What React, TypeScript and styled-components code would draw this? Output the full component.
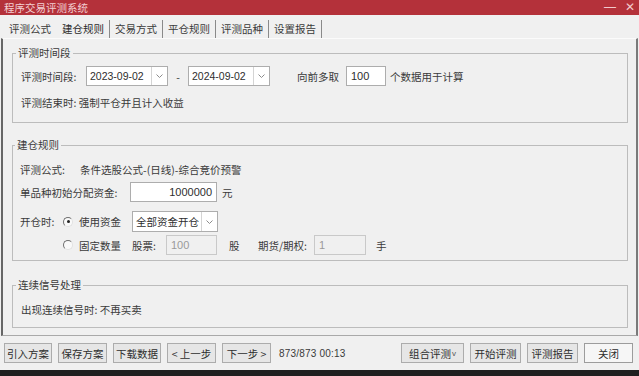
import styled, { createGlobalStyle } from 'styled-components'

const GlobalStyle = createGlobalStyle`
  body {
    margin: 0;
    background: #f0f0f0;
  }
`

const CJK = `"Noto Sans CJK SC", "Noto Sans", sans-serif`
const NUM = `"Liberation Sans", "Noto Sans CJK SC", sans-serif`

const Window = styled.div`
  width: 639px;
  height: 376px;
  overflow: hidden;
  display: flex;
  flex-direction: column;
  background: #f0f0f0;
  color: #3a3a3a;
  font-family: ${CJK};
  font-size: 10.5px;
`

const TitleBar = styled.div`
  height: 15px;
  flex-shrink: 0;
  display: flex;
  align-items: center;
  justify-content: space-between;
  padding: 0 4px;
  background: #b4313a;
  color: #f3d0d3;
  line-height: 15px;
`

const WinControls = styled.div`
  display: flex;
  gap: 9px;
  font-family: ${NUM};
  font-size: 12px;
  color: #f2c9cc;
`

const TabStrip = styled.div`
  height: 23px;
  flex-shrink: 0;
  display: flex;
  align-items: flex-end;
  padding-left: 4px;
`

const Tab = styled.div<{ $sep: boolean; $active?: boolean }>`
  height: 18px;
  line-height: 18px;
  padding: 0 5px;
  border-right: 1px solid ${(p) => (p.$sep ? '#8a8a8a' : 'transparent')};
  color: ${(p) => (p.$active ? '#2a2a2a' : '#3a3a3a')};
  white-space: nowrap;
`

const Panel = styled.div`
  height: 298px;
  flex-shrink: 0;
  box-sizing: border-box;
  margin: 0 1px;
  padding: 7px 8px 0 9px;
  border-top: 1px solid #fbfbfb;
  border-left: 2px solid #666;
  border-right: 2px solid #7a7a7a;
  border-bottom: 1px solid #a9a9a9;
  display: flex;
  flex-direction: column;
`

const Group = styled.fieldset<{ $mt: number; $pb: number; $pl: number }>`
  margin: ${(p) => p.$mt}px 0 0 0;
  padding: 0 8px ${(p) => p.$pb}px ${(p) => p.$pl}px;
  border: 1px solid #bcbcbc;
  min-width: 0;
`

const Legend = styled.legend`
  padding: 0 2px;
  margin-left: -5px;
  height: 14px;
  line-height: 14px;
`

const Row = styled.div<{ $mt: number; $h: number }>`
  margin-top: ${(p) => p.$mt}px;
  height: ${(p) => p.$h}px;
  display: flex;
  align-items: center;
  white-space: nowrap;
`

const Label = styled.span<{ $w?: number; $ml?: number }>`
  display: inline-block;
  width: ${(p) => (p.$w ? `${p.$w}px` : 'auto')};
  margin-left: ${(p) => p.$ml ?? 0}px;
  flex-shrink: 0;
`

const Combo = styled.div<{ $w: number }>`
  width: ${(p) => p.$w}px;
  height: 100%;
  box-sizing: border-box;
  display: flex;
  background: #fff;
  border: 1px solid #adadad;
`

const ComboText = styled.div<{ $num?: boolean }>`
  flex: 1;
  padding-left: 3px;
  display: flex;
  align-items: center;
  font-family: ${(p) => (p.$num ? NUM : CJK)};
  font-size: 10.5px;
  color: #2e2e2e;
  overflow: hidden;
`

const ComboArrow = styled.div`
  width: 15px;
  border-left: 1px solid #d4d4d4;
  display: flex;
  align-items: center;
  justify-content: center;
`

const Dash = styled.span`
  width: 20px;
  text-align: center;
  flex-shrink: 0;
`

const Input = styled.div<{ $w: number; $right?: boolean; $disabled?: boolean }>`
  width: ${(p) => p.$w}px;
  height: 100%;
  box-sizing: border-box;
  flex-shrink: 0;
  display: flex;
  align-items: center;
  justify-content: ${(p) => (p.$right ? 'flex-end' : 'flex-start')};
  padding: 0 4px;
  background: ${(p) => (p.$disabled ? '#f0f0f0' : '#fff')};
  border: 1px solid ${(p) => (p.$disabled ? '#c9c9c9' : '#adadad')};
  color: ${(p) => (p.$disabled ? '#9a9a9a' : '#2e2e2e')};
  font-family: ${NUM};
  font-size: 11px;
`

const Radio = styled.span<{ $checked?: boolean }>`
  width: 10px;
  height: 10px;
  box-sizing: border-box;
  flex-shrink: 0;
  border-radius: 50%;
  border: 1px solid;
  border-color: #6f6f6f #e2e2e2 #e2e2e2 #6f6f6f;
  background: #f9f9f9;
  display: flex;
  align-items: center;
  justify-content: center;
  margin-right: 6px;

  &::after {
    content: '';
    width: 3px;
    height: 3px;
    border-radius: 50%;
    background: ${(p) => (p.$checked ? '#222' : 'transparent')};
  }
`

const Footer = styled.div`
  height: 34px;
  flex-shrink: 0;
  display: flex;
  align-items: center;
  gap: 6px;
  padding: 0 6px 0 4px;
`

const Button = styled.div<{ $w: number; $primary?: boolean }>`
  width: ${(p) => p.$w}px;
  height: 20px;
  box-sizing: border-box;
  display: flex;
  align-items: center;
  justify-content: center;
  background: ${(p) => (p.$primary ? '#f6f6f6' : '#e6e6e6')};
  border: 1px solid ${(p) => (p.$primary ? '#9c9c9c' : '#acacac')};
  color: #2e2e2e;
  white-space: nowrap;
`

const Caret = styled.span`
  font-family: ${NUM};
  font-size: 8px;
  margin-left: 1px;
  color: #555;
`

const Status = styled.span`
  margin-left: 2px;
  font-family: ${NUM};
  font-size: 10px;
  color: #3a3a3a;
  letter-spacing: 0.2px;
`

const Spacer = styled.div`
  flex: 1;
`

const BottomBar = styled.div`
  height: 6px;
  flex-shrink: 0;
  background: #1f1f1f;
`

function Arrow() {
  return (
    <svg width="7" height="4" viewBox="0 0 7 4">
      <path d="M0.5 0.5 L3.5 3.5 L6.5 0.5" fill="none" stroke="#8c8c8c" strokeWidth="1" />
    </svg>
  )
}

function DateBox({ value }: { value: string }) {
  return (
    <Combo $w={82}>
      <ComboText $num>{value}</ComboText>
      <ComboArrow>
        <Arrow />
      </ComboArrow>
    </Combo>
  )
}

const tabs = ['评测公式', '建仓规则', '交易方式', '平仓规则', '评测品种', '设置报告']

export default function App() {
  return (
    <Window>
      <GlobalStyle />
      <TitleBar>
        <span>程序交易评测系统</span>
        <WinControls>
          <span>—</span>
          <span>✕</span>
        </WinControls>
      </TitleBar>

      <TabStrip>
        {tabs.map((t, i) => (
          <Tab key={t} $sep={i !== 0} $active={i === 1}>
            {t}
          </Tab>
        ))}
      </TabStrip>

      <Panel>
        <Group $mt={0} $pb={13} $pl={8}>
          <Legend>评测时间段</Legend>
          <Row $mt={6} $h={20}>
            <Label $w={65}>评测时间段:</Label>
            <DateBox value="2023-09-02" />
            <Dash>-</Dash>
            <DateBox value="2024-09-02" />
            <Label $w={49} $ml={27}>
              向前多取
            </Label>
            <Input $w={40}>100</Input>
            <Label $ml={4}>个数据用于计算</Label>
          </Row>
          <Row $mt={9} $h={14}>
            <Label>评测结束时: 强制平仓并且计入收益</Label>
          </Row>
        </Group>

        <Group $mt={15} $pb={5} $pl={7}>
          <Legend>建仓规则</Legend>
          <Row $mt={10} $h={14}>
            <Label $w={60}>评测公式:</Label>
            <Label>条件选股公式-(日线)-综合竞价预警</Label>
          </Row>
          <Row $mt={6} $h={20}>
            <Label $w={110}>单品种初始分配资金:</Label>
            <Input $w={87} $right>
              1000000
            </Input>
            <Label $ml={5}>元</Label>
          </Row>
          <Row $mt={9} $h={21}>
            <Label $w={43}>开仓时:</Label>
            <Radio $checked />
            <Label $w={53}>使用资金</Label>
            <Combo $w={86}>
              <ComboText>全部资金开仓</ComboText>
              <ComboArrow>
                <Arrow />
              </ComboArrow>
            </Combo>
          </Row>
          <Row $mt={3} $h={20}>
            <Label $w={43} />
            <Radio />
            <Label $w={53}>固定数量</Label>
            <Label $w={34}>股票:</Label>
            <Input $w={51} $disabled>
              100
            </Input>
            <Label $w={29} $ml={12}>
              股
            </Label>
            <Label $w={56}>期货/期权:</Label>
            <Input $w={52} $disabled>
              1
            </Input>
            <Label $ml={10}>手</Label>
          </Row>
        </Group>

        <Group $mt={17} $pb={11} $pl={8}>
          <Legend>连续信号处理</Legend>
          <Row $mt={10} $h={14}>
            <Label>出现连续信号时: 不再买卖</Label>
          </Row>
        </Group>
      </Panel>

      <Footer>
        <Button $w={48}>引入方案</Button>
        <Button $w={49}>保存方案</Button>
        <Button $w={48}>下载数据</Button>
        <Button $w={49}>&lt; 上一步</Button>
        <Button $w={49}>下一步 &gt;</Button>
        <Status>873/873 00:13</Status>
        <Spacer />
        <Button $w={63}>
          组合评测<Caret>v</Caret>
        </Button>
        <Button $w={51}>开始评测</Button>
        <Button $w={51}>评测报告</Button>
        <Button $w={49} $primary>
          关闭
        </Button>
      </Footer>
      <BottomBar />
    </Window>
  )
}
